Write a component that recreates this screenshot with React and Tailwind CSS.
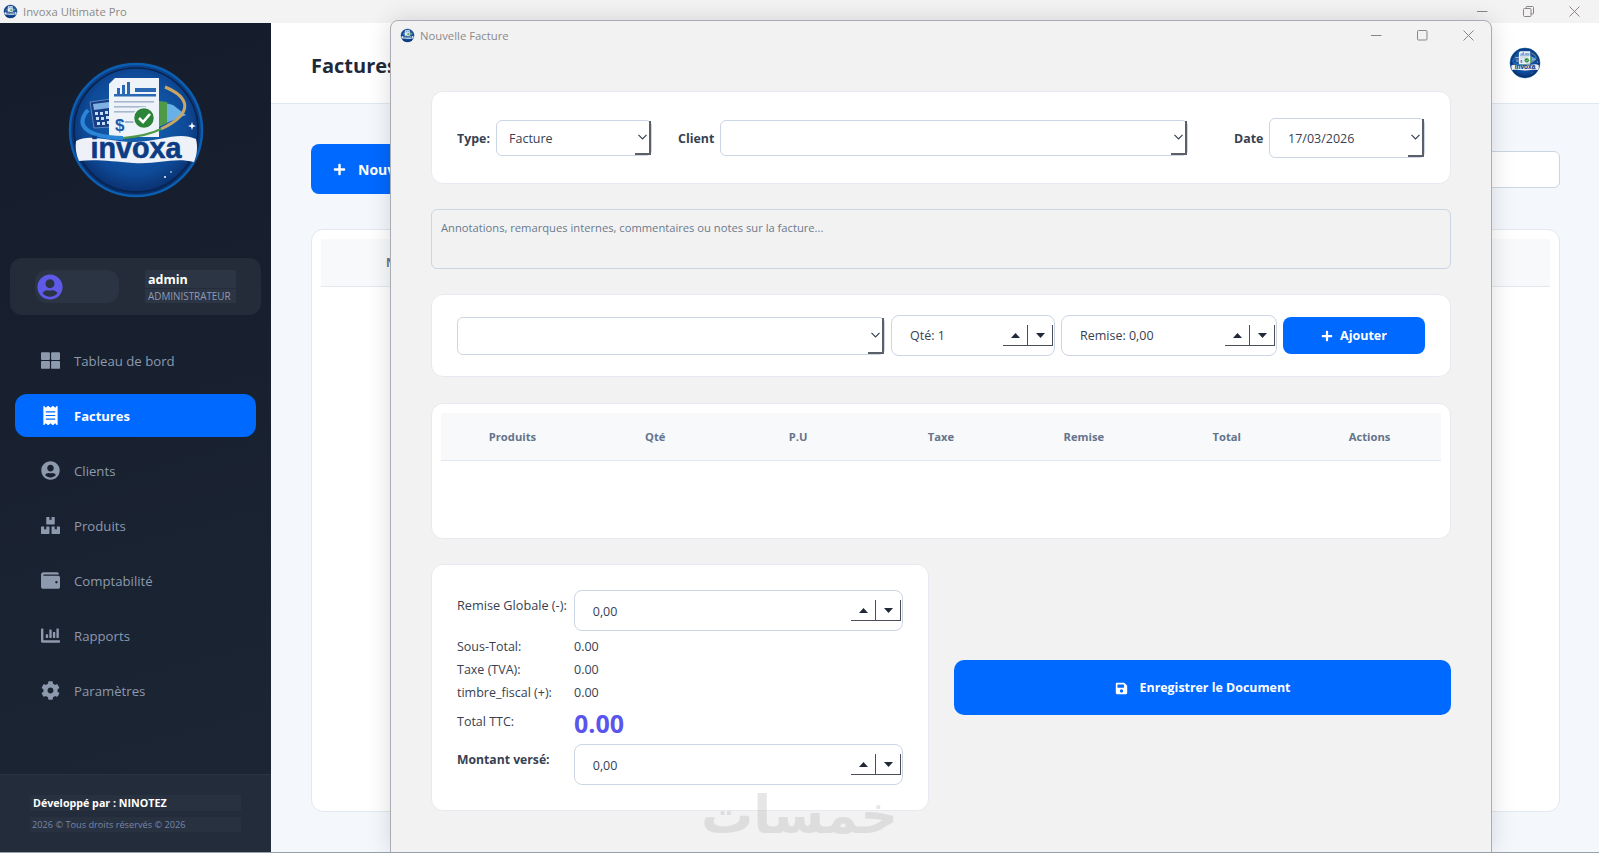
import React from "react";
import { FaThLarge, FaReceipt, FaUserCircle, FaBoxes, FaWallet, FaChartBar, FaCog, FaPlus, FaSave } from "react-icons/fa";

function Logo({ size = 150, id = "a" }) {
  return (
    <svg width={size} height={size} viewBox="0 0 150 150" className="shrink-0">
      <defs>
        <radialGradient id={`bg${id}`} cx="50%" cy="45%" r="55%">
          <stop offset="0%" stopColor="#1467b8" />
          <stop offset="70%" stopColor="#0e4a98" />
          <stop offset="100%" stopColor="#0a2c68" />
        </radialGradient>
      </defs>
      <circle cx="75" cy="75" r="66" fill={`url(#bg${id})`} stroke="#0c5fb0" strokeWidth="2.5" />
      <circle cx="75" cy="75" r="62" fill="none" stroke="#08244f" strokeWidth="1.6" />
      <path d="M97 46 L112 50 L125 60 L110 66 L97 72 Z" fill="#68b0e8" />
      <path d="M97 46 L106 47 L106 68 L97 72 Z" fill="#4f9a48" />
      <path d="M29 47 L50 44 L50 72 L33 73 Z" fill="#173f86" stroke="#8fb4da" strokeWidth=".6" />
      <path d="M32 49 L48 47 L48 53 L33 55 Z" fill="#7fb2e2" />
      <g fill="#c4dcf4">
        <rect x="34" y="57" width="3" height="3" />
        <rect x="39" y="57" width="3" height="3" />
        <rect x="44" y="56" width="3" height="3" />
        <rect x="35" y="62" width="3" height="3" />
        <rect x="40" y="62" width="3" height="3" />
        <rect x="45" y="61" width="3" height="3" />
        <rect x="36" y="67" width="3" height="3" />
        <rect x="41" y="67" width="3" height="3" />
        <rect x="46" y="66" width="3" height="3" />
      </g>
      <path d="M54 23 L98 23 L98 82 L48 82 L48 29 Z" fill="#eef3f9" />
      <rect x="56" y="33" width="3" height="6" fill="#2a68b4" />
      <rect x="61" y="30" width="3" height="9" fill="#2a68b4" />
      <rect x="66" y="27" width="3" height="12" fill="#2a68b4" />
      <rect x="74" y="33" width="21" height="4" fill="#2a68b4" />
      <rect x="53" y="39" width="42" height="2.5" fill="#2a68b4" />
      <g fill="#a8b8cc">
        <rect x="53" y="46" width="40" height="1.6" />
        <rect x="53" y="51" width="32" height="1.6" />
        <rect x="53" y="56" width="36" height="1.6" />
      </g>
      <text x="54" y="76" fontFamily="'Liberation Sans',sans-serif" fontWeight="700" fontSize="17" fill="#1c5aa8">$</text>
      <rect x="64" y="66" width="10" height="2" fill="#a8b8cc" />
      <path d="M27 55 C14 70 24 82 62 83" fill="none" stroke="#2b86d8" strokeWidth="4" />
      <path d="M104 32 C128 42 134 58 100 74" fill="none" stroke="#c9a664" strokeWidth="3" />
      <path d="M100 74 C88 80 74 82 62 83" fill="none" stroke="#4f9a48" strokeWidth="2" />
      <circle cx="83" cy="63" r="10.5" fill="#2c8438" stroke="#eef3f9" strokeWidth="1.5" />
      <path d="M78 63 L82 67 L89 59" fill="none" stroke="#fff" strokeWidth="2.6" />
      <path d="M15 86 C30 78 50 88 75 87 C100 86 118 76 135 84 C137 92 136 100 133 107 C112 102 96 110 72 108 C50 106 34 104 18 106 C15 100 14 92 15 86 Z" fill="#eef2f8" />
      <text x="75" y="103" textAnchor="middle" textLength="91" lengthAdjust="spacingAndGlyphs" fontFamily="'Liberation Sans',sans-serif" fontWeight="700" fontSize="29" stroke="#0c3c84" strokeWidth=".6" fill="#0c3c84">invoxa</text>
      <path d="M131 67 l1 3 3 1 -3 1 -1 3 -1 -3 -3 -1 3 -1 z" fill="#fff" />
      <circle cx="104" cy="122" r="1" fill="#fff" />
      <circle cx="110" cy="117" r=".8" fill="#fff" />
    </svg>
  );
}

function WinControls({ restore }) {
  return (
    <div className="flex items-center gap-[35px] text-[#8d8585]">
      <svg width="11" height="11" viewBox="0 0 11 11"><path d="M0 5.5H10.5" stroke="currentColor" /></svg>
      {restore ? (
        <svg width="11" height="11" viewBox="0 0 11 11" fill="none" stroke="currentColor"><rect x=".5" y="2.5" width="7.5" height="8" rx="1" /><path d="M3 2.5V1.5a1 1 0 0 1 1-1H9.5a1 1 0 0 1 1 1V7a1 1 0 0 1-1 1H8" /></svg>
      ) : (
        <svg width="11" height="11" viewBox="0 0 11 11" fill="none" stroke="currentColor"><rect x=".5" y=".5" width="9.5" height="9.5" rx="1" /></svg>
      )}
      <svg width="11" height="11" viewBox="0 0 11 11" stroke="currentColor"><path d="M.5 .5L10.5 10.5M10.5 .5L.5 10.5" /></svg>
    </div>
  );
}

function Chevron() {
  return <svg width="9" height="6" viewBox="0 0 9 6" fill="none" stroke="#374151" strokeWidth="1.2"><path d="M.5 .8L4.5 4.8L8.5 .8" /></svg>;
}

function SelectBox({ className, children }) {
  return (
    <div className={`flex items-stretch justify-between rounded-md border border-[#ccd5e3] bg-white ${className}`}>
      <span className="self-center pt-[3px] pl-[12px] text-[12.5px] text-[#374151]">{children}</span>
      <span className="flex w-[16px] items-center justify-center border-r-2 border-b-2 border-[#5b6068]"><Chevron /></span>
    </div>
  );
}

function Spin() {
  return (
    <div className="flex h-[21px] shrink-0">
      <span className="flex w-[25px] items-center justify-center border-r border-b border-[#4a4f58]">
        <svg width="9" height="5" viewBox="0 0 9 5"><path d="M4.5 0L9 5H0Z" fill="#1f2937" /></svg>
      </span>
      <span className="flex w-[25px] items-center justify-center border-r border-b border-[#4a4f58]">
        <svg width="9" height="5" viewBox="0 0 9 5"><path d="M4.5 5L9 0H0Z" fill="#1f2937" /></svg>
      </span>
    </div>
  );
}

function SpinBox({ className, textClass, children }) {
  return (
    <div className={`flex items-center justify-between rounded-lg border border-[#ccd5e3] bg-white pr-[1px] ${className}`}>
      <span className={`text-[12.5px] text-[#374151] ${textClass}`}>{children}</span>
      <Spin />
    </div>
  );
}

const nav = [
  [FaThLarge, "Tableau de bord"],
  [FaReceipt, "Factures", true],
  [FaUserCircle, "Clients"],
  [FaBoxes, "Produits"],
  [FaWallet, "Comptabilité"],
  [FaChartBar, "Rapports"],
  [FaCog, "Paramètres"],
];

const cols = ["Produits", "Qté", "P.U", "Taxe", "Remise", "Total", "Actions"];

function Totals({ label, value }) {
  return (
    <div className="flex h-[23px] items-center text-[12.5px] text-[#374151]">
      <span className="w-[117px]">{label}</span>
      <span>{value}</span>
    </div>
  );
}

export default function App() {
  return (
    <div className="relative flex h-[853px] w-full flex-col overflow-hidden border-b border-[#9aa0a8] bg-[#f3f3f3] font-['Open_Sans',sans-serif]">
      <div className="flex h-[23px] shrink-0 items-center justify-between pr-[19px] pl-[3px]">
        <div className="flex items-center gap-[5px]">
          <Logo size={15} id="t" />
          <span className="pt-[1px] text-[11.3px] text-[#8a8a8a]">Invoxa Ultimate Pro</span>
        </div>
        <WinControls restore />
      </div>

      <div className="flex min-h-0 flex-1">
        <aside className="flex w-[271px] shrink-0 flex-col bg-[linear-gradient(165deg,#151c2b,#1c2635)]">
          <div className="flex justify-center pt-[32px]"><Logo id="m" /></div>
          <div className="mx-[10px] mt-[53px] flex h-[57px] items-center rounded-xl bg-[#242c3a] pl-[25px]">
            <div className="flex h-[33px] w-[84px] items-center rounded-xl bg-[#2b3442] pl-[2px]">
              <FaUserCircle className="size-[26px] text-[#5f59e8]" />
            </div>
            <div className="ml-[26px] flex w-[91px] flex-col gap-[1px]">
              <div className="flex h-[18px] items-center bg-[#2c3543] pt-[2px] pl-[3px] text-[12.5px] font-bold text-white">admin</div>
              <div className="flex h-[14px] items-center bg-[#2c3543] pl-[3px] text-[9.9px] whitespace-nowrap text-[#8f9bb3]">ADMINISTRATEUR</div>
            </div>
          </div>
          <nav className="mx-[15px] mt-[24px] flex flex-col gap-[12px]">
            {nav.map(([Icon, label, active]) => (
              <div key={label} className={`flex h-[43px] items-center gap-[14px] rounded-xl pl-[25px] ${active ? "bg-[#0069ff] text-[13px] font-bold text-white" : "text-[13.2px] text-[#8d99ad]"}`}>
                <span className="flex w-[20px] justify-center"><Icon className="size-[19px]" /></span>
                <span className="pt-[2px]">{label}</span>
              </div>
            ))}
          </nav>
          <div className="mt-auto flex h-[78px] flex-col gap-[6px] border-t border-[#2a3341] bg-[#232c3a] px-[30px] pt-[20px]">
            <div className="flex h-[16px] items-center bg-[#283140] pt-[1px] pl-[3px] text-[10.7px] font-bold text-white">Développé par : NINOTEZ</div>
            <div className="flex h-[15px] items-center bg-[#283140] pt-[1px] pl-[2px] text-[9.2px] text-[#7887a8]">2026 © Tous droits réservés © 2026</div>
          </div>
        </aside>

        <main className="flex min-w-0 flex-1 flex-col bg-[#f4f7fb]">
          <header className="flex h-[81px] shrink-0 items-center justify-between border-b border-[#e2e8f0] bg-white pr-[57px] pl-[40px]">
            <h1 className="pt-[5px] text-[20px] font-bold text-[#1e293b]">Factures</h1>
            <Logo size={34} id="h" />
          </header>
          <div className="flex min-h-0 flex-1 flex-col pt-[40px] pr-[39px] pb-[40px] pl-[40px]">
            <div className="flex h-[50px] items-center justify-between">
              <button className="flex h-[50px] items-center gap-[12px] rounded-lg bg-[#0069ff] px-[22px] text-[14px] font-bold text-white">
                <FaPlus className="size-[13px]" />Nouvelle Facture
              </button>
              <div className="h-[37px] w-[320px] rounded-md border border-[#ccd5e3] bg-white" />
            </div>
            <div className="mt-[35px] flex-1 rounded-xl border border-[#e2e8f0] bg-white p-[9px]">
              <div className="flex h-[48px] items-center border-b border-[#e2e8f0] bg-[#f8f9fb] pl-[65px] text-[11.5px] font-bold text-[#64748b]">N° Facture</div>
            </div>
          </div>
        </main>
      </div>

      {/* Modal window floating above the app */}
      <section className="absolute top-[20px] left-[390px] flex h-[833px] w-[1102px] flex-col rounded-t-lg border border-[#a8adb4] bg-[#f2f2f2] shadow-[0_0_24px_rgba(0,0,0,0.14)]">
        <div className="flex h-[29px] shrink-0 items-center justify-between pr-[17px] pl-[9px]">
          <div className="flex items-center gap-[5px]">
            <Logo size={15} id="w" />
            <span className="pt-[1px] text-[11.3px] text-[#8a8a8a]">Nouvelle Facture</span>
          </div>
          <WinControls />
        </div>

        <div className="flex flex-col px-[40px] pt-[41px]">
          <div className="flex h-[93px] items-center rounded-xl border border-[#e6eaf0] bg-white px-[25px]">
            <span className="w-[39px] pt-[3px] text-[12.4px] font-bold text-[#374151]">Type:</span>
            <SelectBox className="h-[36px] w-[156px]">Facture</SelectBox>
            <span className="ml-[26px] w-[42px] pt-[3px] text-[12.4px] font-bold text-[#374151]">Client</span>
            <SelectBox className="h-[36px] w-[468px]" />
            <span className="ml-[46px] w-[35px] pt-[3px] text-[12.4px] font-bold text-[#374151]">Date</span>
            <div className="flex h-[40px] w-[156px] items-stretch justify-between rounded-md border border-[#ccd5e3] bg-white">
              <span className="self-center pt-[3px] pl-[18px] text-[12.5px] text-[#374151]">17/03/2026</span>
              <span className="flex w-[16px] items-center justify-center border-r-2 border-b-2 border-[#5b6068]"><Chevron /></span>
            </div>
          </div>

          <div className="mt-[25px] h-[60px] rounded-md border border-[#ccd5e3] px-[9px] pt-[10px] text-[11.2px] text-[#6b7a8c]">
            Annotations, remarques internes, commentaires ou notes sur la facture...
          </div>

          <div className="mt-[25px] flex h-[83px] items-center rounded-xl border border-[#e6eaf0] bg-white px-[25px]">
            <SelectBox className="h-[38px] w-[428px]" />
            <SpinBox className="ml-[6px] h-[41px] w-[164px]" textClass="pt-[2px] pl-[18px]">Qté: 1</SpinBox>
            <SpinBox className="ml-[6px] h-[41px] w-[216px]" textClass="pt-[2px] pl-[18px]">Remise: 0,00</SpinBox>
            <button className="ml-[6px] flex h-[37px] w-[142px] items-center justify-center gap-[7px] rounded-lg bg-[#0069ff] pt-[1px] text-[12.5px] font-bold text-white">
              <FaPlus className="size-[12px]" />Ajouter
            </button>
          </div>

          <div className="mt-[26px] h-[136px] rounded-xl border border-[#e6eaf0] bg-white px-[9px] pt-[9px]">
            <div className="grid h-[48px] grid-cols-7 items-center border-b border-[#e2e8f0] bg-[#f8f9fb] pt-[2px] text-center text-[11.2px] font-bold text-[#64748b]">
              {cols.map((c) => <span key={c}>{c}</span>)}
            </div>
          </div>

          <div className="mt-[25px] flex items-center gap-[25px]">
            <div className="flex h-[247px] w-[498px] shrink-0 flex-col rounded-xl border border-[#e6eaf0] bg-white px-[25px] pt-[25px]">
              <div className="flex items-start text-[12.5px] text-[#374151]">
                <span className="w-[117px] pt-[6px] text-[12.7px] whitespace-nowrap">Remise Globale (-):</span>
                <SpinBox className="h-[41px] w-[330px]" textClass="pt-[4px] pl-[18px]">0,00</SpinBox>
              </div>
              <div className="mt-[5px]">
                <Totals label="Sous-Total:" value="0.00" />
                <Totals label="Taxe (TVA):" value="0.00" />
                <Totals label="timbre_fiscal (+):" value="0.00" />
              </div>
              <div className="flex h-[35px] items-center text-[12.5px] text-[#374151]">
                <span className="w-[117px]">Total TTC:</span>
                <span className="pt-[3px] text-[25px] font-bold text-[#5a55ec]">0.00</span>
              </div>
              <div className="mt-[4px] flex items-start text-[12.5px] text-[#374151]">
                <span className="w-[117px] pt-[7px] text-[12.2px] font-bold">Montant versé:</span>
                <SpinBox className="h-[41px] w-[330px]" textClass="pt-[4px] pl-[18px]">0,00</SpinBox>
              </div>
            </div>
            <button className="flex h-[55px] flex-1 items-center justify-center gap-[12px] rounded-[10px] bg-[#0069ff] pt-[1px] text-[12.4px] font-bold text-white">
              <FaSave className="size-[13px]" />Enregistrer le Document
            </button>
          </div>
        </div>

        <span dir="rtl" className="pointer-events-none absolute top-[761px] left-[310px] font-['DejaVu_Sans',sans-serif] text-[52px] leading-[66px] font-bold text-[#b0b0b0] opacity-30">خمسات</span>
      </section>
    </div>
  );
}
